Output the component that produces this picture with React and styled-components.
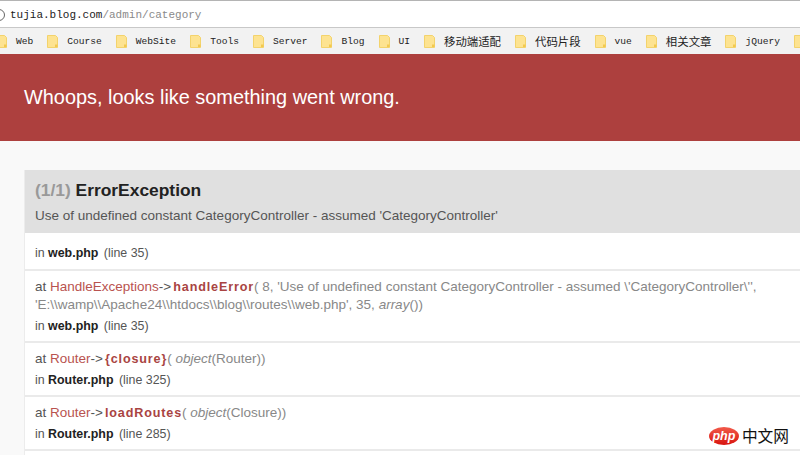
import styled, { createGlobalStyle } from "styled-components";

const GlobalStyle = createGlobalStyle`
  html, body {
    margin: 0;
    padding: 0;
    background: #f9f9f9;
  }
  body {
    font-family: "Liberation Sans", Arial, sans-serif;
    width: 800px;
    height: 455px;
    overflow: hidden;
  }
`;

const Page = styled.div`
  position: relative;
  width: 800px;
  height: 455px;
  overflow: hidden;
`;

const AddressBar = styled.div`
  display: flex;
  align-items: center;
  height: 25px;
  background: #fff;
  border-top: 1px solid #b4b4b4;
  border-bottom: 1px solid #c8c8c8;
  font-family: "Liberation Mono", monospace;
  font-size: 11px;
  padding-top: 1px;
  box-sizing: content-box;
`;

const Host = styled.span`
  color: #222;
  margin-left: 4px;
`;

const UrlPath = styled.span`
  color: #8a8a8a;
`;

const BookmarkBar = styled.div`
  display: flex;
  align-items: center;
  gap: 14px;
  height: 26px;
  margin-left: -4px;
  background: #f2f2f2;
  white-space: nowrap;
`;

const Bookmark = styled.div`
  display: flex;
  align-items: center;
  gap: 9px;
  flex: none;
  color: #222;
  font-family: "Liberation Mono", "Noto Sans CJK SC", monospace;
  font-size: ${(p) => (p.$cjk ? "11.4px" : "9.6px")};
`;

const Banner = styled.header`
  display: flex;
  align-items: center;
  height: 87px;
  padding-left: 24px;
  background: #ad403e;
  color: #fff;
  font-size: 19.9px;
`;

const Content = styled.main`
  padding: 29px 0 0 25px;
`;

const Card = styled.section`
  width: 800px;
  min-height: 400px;
  background: #fff;
  border-left: 1px solid #ececec;
  margin-left: -1px;
`;

const CardHead = styled.div`
  height: 63px;
  padding: 10px 0 0 10px;
  box-sizing: border-box;
  background: #e0e0e0;
  color: #555;
  font-size: 13.5px;
`;

const Title = styled.h2`
  margin: 0 0 8px;
  font-size: 17.4px;
  line-height: 20px;
  font-weight: bold;
  color: #222;
`;

const Count = styled.span`
  color: #999;
`;

const Row = styled.div`
  padding: ${(p) => (p.$single ? "12px 10px 8px" : "7px 10px 7px")};
  border-bottom: 2px solid #eaeaea;
  font-size: 12.4px;
  line-height: 16px;
  color: #555;
`;

const Call = styled.div`
  margin-bottom: 4px;
  font-size: 13.5px;
  line-height: 18px;
  white-space: nowrap;
`;

const Cls = styled.span`
  color: #b9534f;
`;

const Arrow = styled.span`
  margin: 0 2px 0 0;
`;

const Method = styled.b`
  color: #a94442;
  font-size: 12.6px;
  letter-spacing: 0.85px;
`;

const Args = styled.span`
  color: #888;
`;

const FileName = styled.b`
  color: #222;
  margin-right: 2px;
`;

const Watermark = styled.div`
  position: absolute;
  right: 11px;
  bottom: 10px;
  display: flex;
  align-items: center;
  gap: 3px;
`;

const PhpBadge = styled.span`
  display: flex;
  align-items: center;
  justify-content: center;
  width: 30px;
  height: 18px;
  border-radius: 50%;
  background: linear-gradient(#f25a4a, #d8140f);
  color: #fff;
  font-size: 12.5px;
  font-style: italic;
  font-weight: bold;
  box-shadow: 0 0 0 1px #fff;
`;

const PhpName = styled.span`
  color: #111;
  font-family: "Noto Sans CJK SC", sans-serif;
  font-size: 15.7px;
  line-height: 18px;
`;

const Folder = () => (
  <svg width="11" height="13" viewBox="0 0 11 13">
    <path d="M.5.5h8l2 2v10H.5z" fill="#fde391" stroke="#f3d36c" />
    <path d="M8 9.5h2.5V12H8z" fill="#f3c94f" />
  </svg>
);

const bookmarks = [
  ["Web"],
  ["Course"],
  ["WebSite"],
  ["Tools"],
  ["Server"],
  ["Blog"],
  ["UI"],
  ["移动端适配", true],
  ["代码片段", true],
  ["vue"],
  ["相关文章", true],
  ["jQuery"],
  [""],
];

const App = () => (
  <Page>
    <GlobalStyle />
    <AddressBar>
      <svg width="10" height="14" viewBox="0 0 10 14" style={{ marginLeft: -4 }}>
        <circle cx="3" cy="7" r="5.5" fill="none" stroke="#666" />
      </svg>
      <Host>tujia.blog.com</Host>
      <UrlPath>/admin/category</UrlPath>
    </AddressBar>
    <BookmarkBar>
      {bookmarks.map(([name, cjk], i) => (
        <Bookmark key={i} $cjk={cjk}>
          <Folder />
          {name && <span>{name}</span>}
        </Bookmark>
      ))}
    </BookmarkBar>
    <Banner>Whoops, looks like something went wrong.</Banner>
    <Content>
      <Card>
        <CardHead>
          <Title>
            <Count>(1/1)</Count> ErrorException
          </Title>
          Use of undefined constant CategoryController - assumed 'CategoryController'
        </CardHead>
        <Row $single>
          in <FileName>web.php</FileName> (line 35)
        </Row>
        <Row>
          <Call>
            at <Cls>HandleExceptions</Cls>
            <Arrow>-&gt;</Arrow>
            <Method>handleError</Method>
            <Args>
              ( 8, 'Use of undefined constant CategoryController - assumed \'CategoryController\'',
              <br />
              'E:\\wamp\\Apache24\\htdocs\\blog\\routes\\web.php', 35, <i>array</i>())
            </Args>
          </Call>
          in <FileName>web.php</FileName> (line 35)
        </Row>
        <Row>
          <Call>
            at <Cls>Router</Cls>
            <Arrow>-&gt;</Arrow>
            <Method>{"{closure}"}</Method>
            <Args>
              ( <i>object</i>(Router))
            </Args>
          </Call>
          in <FileName>Router.php</FileName> (line 325)
        </Row>
        <Row>
          <Call>
            at <Cls>Router</Cls>
            <Arrow>-&gt;</Arrow>
            <Method>loadRoutes</Method>
            <Args>
              ( <i>object</i>(Closure))
            </Args>
          </Call>
          in <FileName>Router.php</FileName> (line 285)
        </Row>
      </Card>
    </Content>
    <Watermark>
      <PhpBadge>php</PhpBadge>
      <PhpName>中文网</PhpName>
    </Watermark>
  </Page>
);

export default App;
